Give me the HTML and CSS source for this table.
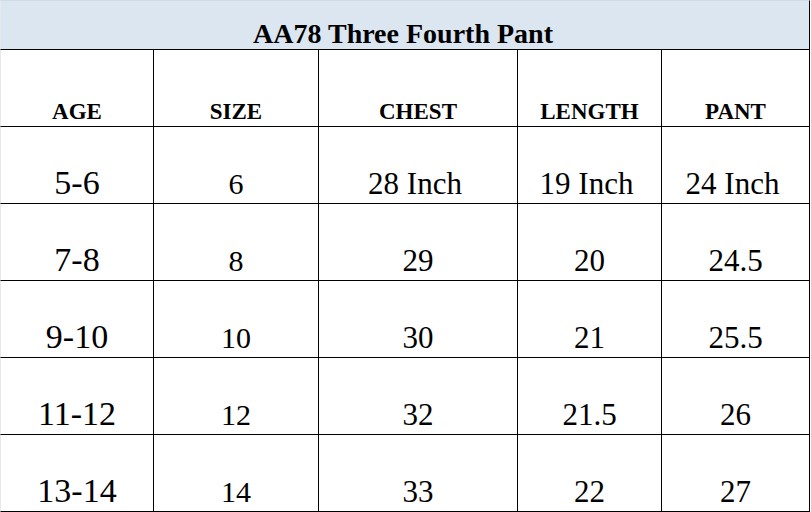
FILE: index.html
```html
<!DOCTYPE html>
<html>
<head>
<meta charset="utf-8">
<link rel="stylesheet" href="styles.css">
</head>
<body>
<div class="sheet">
  <div class="cell title">AA78 Three Fourth Pant</div>

  <div class="cell head">AGE</div>
  <div class="cell head">SIZE</div>
  <div class="cell head">CHEST</div>
  <div class="cell head">LENGTH</div>
  <div class="cell head">PANT</div>

  <div class="cell age">5-6</div>
  <div class="cell size">6</div>
  <div class="cell val unit">28 Inch</div>
  <div class="cell val unit">19 Inch</div>
  <div class="cell val unit">24 Inch</div>

  <div class="cell age">7-8</div>
  <div class="cell size">8</div>
  <div class="cell val">29</div>
  <div class="cell val">20</div>
  <div class="cell val">24.5</div>

  <div class="cell age">9-10</div>
  <div class="cell size">10</div>
  <div class="cell val">30</div>
  <div class="cell val">21</div>
  <div class="cell val">25.5</div>

  <div class="cell age">11-12</div>
  <div class="cell size">12</div>
  <div class="cell val">32</div>
  <div class="cell val">21.5</div>
  <div class="cell val">26</div>

  <div class="cell age">13-14</div>
  <div class="cell size">14</div>
  <div class="cell val">33</div>
  <div class="cell val">22</div>
  <div class="cell val">27</div>
</div>
</body>
</html>
```

FILE: styles.css
```css
html, body {
  margin: 0;
  padding: 0;
  background: #ffffff;
}

.sheet {
  width: 810px;
  display: grid;
  grid-template-columns: 154px 165px 199px 144px 148px;
  grid-template-rows: 50px repeat(6, 77px);
  font-family: "Liberation Serif", "Times New Roman", serif;
  color: #000;
}

.cell {
  box-sizing: border-box;
  display: flex;
  align-items: flex-end;
  justify-content: center;
  border-right: 1px solid #000;
  border-bottom: 1px solid #000;
  line-height: 1;
  white-space: nowrap;
}

.cell:nth-child(5n + 2) {
  border-left: 1px solid #e8e8e8;
}

.title {
  grid-column: 1 / span 5;
  background: #dce6f1;
  font-weight: bold;
  font-size: 28px;
  padding-bottom: 1px;
  padding-right: 4px;
  border-left: 1px solid #e8e8e8;
  border-top: 1px solid #d0dbe8;
}

.head {
  font-weight: bold;
  font-size: 23px;
  padding-bottom: 3px;
}

.age {
  font-size: 34px;
  padding-bottom: 3px;
}

.size {
  font-size: 30px;
  padding-bottom: 4px;
}

.val {
  font-size: 31px;
  padding-bottom: 4px;
}

.unit {
  padding-right: 6px;
}
```
